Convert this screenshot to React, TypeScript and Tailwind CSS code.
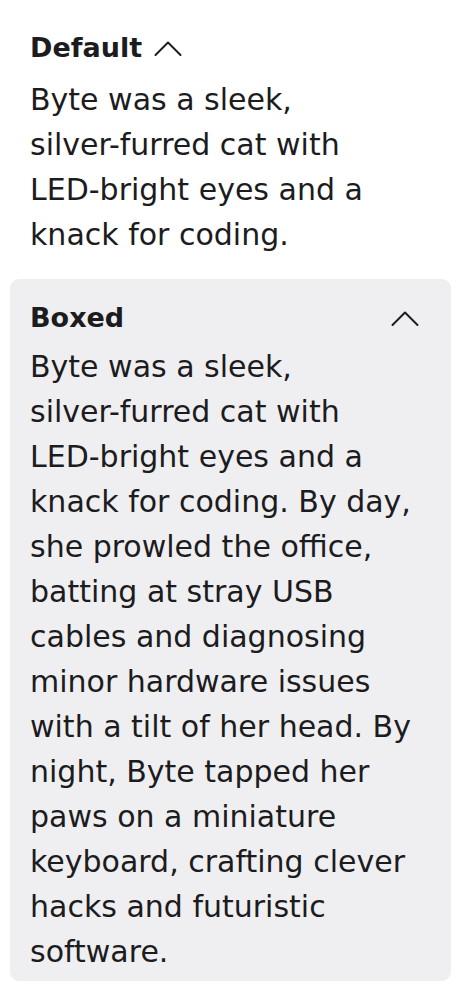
function Chevron() {
  return (
    <svg width="28" height="17" viewBox="0 0 28 17" fill="none" stroke="currentColor" strokeWidth="2" strokeLinecap="round" strokeLinejoin="round">
      <polyline points="1.5,15 14,2.5 26.5,15" />
    </svg>
  );
}

function Story({ full }: { full?: boolean }) {
  return (
    <>
      Byte was a sleek, <span className="whitespace-nowrap">silver-furred</span> cat with{" "}
      <span className="whitespace-nowrap">LED-bright</span> eyes and a knack for coding.
      {full &&
        " By day, she prowled the office, batting at stray USB cables and diagnosing minor hardware issues with a tilt of her head. By night, Byte tapped her paws on a miniature keyboard, crafting clever hacks and futuristic software."}
    </>
  );
}

export default function App() {
  return (
    <div className="min-h-screen bg-white px-[10px] pt-[24px] text-[#1c1c1e] font-['DejaVu_Sans',sans-serif]">
      {/* default accordion */}
      <div className="px-5">
        <button className="flex items-center gap-3 text-[27px] font-semibold leading-[48px]">
          <span>Default</span>
          <Chevron />
        </button>
        <p className="mt-[5px] text-[30px] leading-[45px]">
          <Story />
        </p>
      </div>

      {/* boxed accordion */}
      <div className="mt-[22px] rounded-[9px] bg-[#efeff1] px-5 pt-[15px] pb-[7px]">
        <button className="flex w-full items-center justify-between text-[27px] font-semibold leading-[48px]">
          <span>Boxed</span>
          <span className="mr-3">
            <Chevron />
          </span>
        </button>
        <p className="mt-[2px] text-[30px] leading-[45px]">
          <Story full />
        </p>
      </div>
    </div>
  );
}
